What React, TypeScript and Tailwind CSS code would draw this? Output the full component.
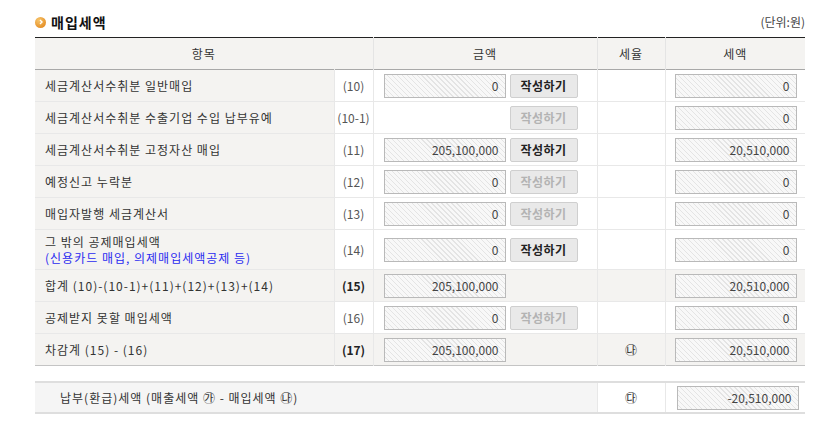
import React from 'react';

type Row = {
  label: React.ReactNode;
  code: string;
  amount?: string;
  button?: 'on' | 'off';
  rate?: string;
  tax: string;
  total?: boolean;
  tall?: boolean;
};

const rows: Row[] = [
  { label: '세금계산서수취분 일반매입', code: '(10)', amount: '0', button: 'on', tax: '0' },
  { label: '세금계산서수취분 수출기업 수입 납부유예', code: '(10-1)', button: 'off', tax: '0' },
  { label: '세금계산서수취분 고정자산 매입', code: '(11)', amount: '205,100,000', button: 'on', tax: '20,510,000' },
  { label: '예정신고 누락분', code: '(12)', amount: '0', button: 'off', tax: '0' },
  { label: '매입자발행 세금계산서', code: '(13)', amount: '0', button: 'off', tax: '0' },
  {
    label: (
      <>
        <div>그 밖의 공제매입세액</div>
        <div className="text-[#2b2bf0]">(신용카드 매입, 의제매입세액공제 등)</div>
      </>
    ),
    code: '(14)',
    amount: '0',
    button: 'on',
    tax: '0',
    tall: true,
  },
  { label: '합계 (10)-(10-1)+(11)+(12)+(13)+(14)', code: '(15)', amount: '205,100,000', tax: '20,510,000', total: true },
  { label: '공제받지 못할 매입세액', code: '(16)', amount: '0', button: 'off', tax: '0' },
  { label: '차감계 (15) - (16)', code: '(17)', amount: '205,100,000', rate: '㉯', tax: '20,510,000', total: true },
];

const Field = ({ value }: { value: string }) => (
  <div className="h-[24px] w-[122px] border border-[#b9b9b9] bg-[repeating-linear-gradient(45deg,#f8f8f8_0px,#f8f8f8_2.5px,#e4e4e4_2.5px,#e4e4e4_3.5px)] text-right pr-[6px] leading-[22px] text-[#444]">
    {value}
  </div>
);

const WriteButton = ({ disabled }: { disabled?: boolean }) => (
  <button
    className={
      'h-[24px] w-[68px] rounded-[2px] border border-[#cfcfcf] bg-[#e9e9e9] font-bold text-[12px] tracking-[0.5px] ' +
      (disabled ? 'text-[#b3b3b3]' : 'text-[#222]')
    }
  >
    작성하기
  </button>
);

export default function App() {
  return (
    <div className="min-h-screen bg-white pl-[35px] pr-[22px] pt-[11px] text-[12px] text-[#333] font-['Noto_Sans_CJK_KR','Malgun_Gothic',sans-serif]">
      <div className="flex items-center justify-between h-[22px]">
        <div className="flex items-center gap-[5px]">
          <span className="flex h-[11px] w-[11px] items-center justify-center rounded-full bg-[radial-gradient(circle_at_35%_30%,#f6c46a,#e07f12)]">
            <svg width="6" height="6" viewBox="0 0 6 6">
              <path d="M2 1 L4 3 L2 5" stroke="#fff" strokeWidth="1.4" fill="none" />
            </svg>
          </span>
          <span className="text-[14px] font-bold text-[#111] tracking-[1px]">매입세액</span>
        </div>
        <span className="text-[12px] text-[#444]">(단위:원)</span>
      </div>

      <table className="mt-[4px] w-[770px] table-fixed border-collapse border-t border-t-[#222]">
        <colgroup>
          <col className="w-[299px]" />
          <col className="w-[39px]" />
          <col className="w-[224px]" />
          <col className="w-[68px]" />
          <col className="w-[140px]" />
        </colgroup>
        <thead>
          <tr className="h-[32px] bg-[#f4f3f1] border-b border-b-[#a8a8a8] tracking-[1px]">
            <th colSpan={2} className="font-normal border-r border-[#e4e4e4]">항목</th>
            <th className="font-normal border-r border-[#e4e4e4]">금액</th>
            <th className="font-normal border-r border-[#e4e4e4]">세율</th>
            <th className="font-normal">세액</th>
          </tr>
        </thead>
        <tbody className="border-b border-b-[#c4c4c4]">
          {rows.map((r, i) => (
            <tr
              key={i}
              className={
                (r.tall ? 'h-[40px] ' : 'h-[32px] ') +
                'border-t border-t-[#e8e8e8] ' +
                (r.total ? 'bg-[#f4f3f1]' : 'bg-white')
              }
            >
              <td className="bg-[#f4f3f1] pl-[10px] leading-[16px] tracking-[1px] border-r border-[#e8e8e8]">{r.label}</td>
              <td className={'text-center border-r border-[#e8e8e8] ' + (r.total ? 'font-bold text-[#222]' : 'text-[#555]')}>
                {r.code}
              </td>
              <td className="pl-[10px] border-r border-[#e8e8e8]">
                <div className="flex items-center gap-[4px]">
                  {r.amount !== undefined ? <Field value={r.amount} /> : <div className="w-[122px]" />}
                  {r.button && <WriteButton disabled={r.button === 'off'} />}
                </div>
              </td>
              <td className="text-center border-r border-[#e8e8e8]">{r.rate}</td>
              <td className="pl-[9px]">
                <Field value={r.tax} />
              </td>
            </tr>
          ))}
        </tbody>
      </table>

      <table className="mt-[15px] w-[770px] table-fixed border-collapse border-y-2 border-y-[#dedede]">
        <colgroup>
          <col className="w-[562px]" />
          <col className="w-[68px]" />
          <col className="w-[140px]" />
        </colgroup>
        <tbody>
          <tr className="h-[31px]">
            <td className="bg-[#f5f5f5] pl-[25px] tracking-[1px] border-r border-[#e8e8e8]">납부(환급)세액 (매출세액 ㉮ - 매입세액 ㉯)</td>
            <td className="text-center border-r border-[#e8e8e8]">㉰</td>
            <td className="pl-[11px]">
              <Field value="-20,510,000" />
            </td>
          </tr>
        </tbody>
      </table>
    </div>
  );
}
